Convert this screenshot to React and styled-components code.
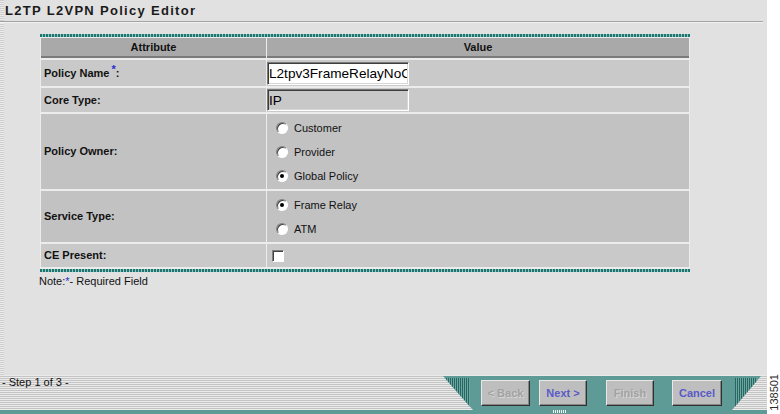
import React from 'react';
import styled, { createGlobalStyle } from 'styled-components';

const GlobalStyle = createGlobalStyle`
  html, body {
    margin: 0;
    padding: 0;
  }
  body {
    font-family: "Liberation Sans", Arial, sans-serif;
    background: #fff;
  }
`;

const TEAL = '#5e9b96';

const Page = styled.div`
  display: flex;
  width: 780px;
  height: 414px;
  overflow: hidden;
`;

const Main = styled.div`
  flex: 1;
  display: flex;
  flex-direction: column;
  background:
    repeating-linear-gradient(180deg, #cdcdcd 0 1px, #ececec 1px 2px) left top / 4px 100% no-repeat,
    #e1e1e1;
`;

const TitleBar = styled.div`
  height: 21px;
  margin-right: 4px;
  padding-left: 5px;
  display: flex;
  align-items: center;
  border-bottom: 1px solid #a3a3a3;
  box-shadow: 0 1px 0 #f2f2f2;
  font-size: 13px;
  font-weight: 700;
  letter-spacing: 1.3px;
  color: #1a1a1a;
`;

const Body = styled.div`
  padding: 12px 0 0 40px;
`;

const Table = styled.div`
  width: 650px;
  box-sizing: border-box;
  display: grid;
  grid-template-columns: 225px 1fr;
  column-gap: 1px;
  row-gap: 2px;
  padding: 0 1px;
  background: #ececec;

  &::before,
  &::after {
    content: '';
    grid-column: 1 / -1;
    height: 3px;
    margin: 0 -1px;
    background: repeating-linear-gradient(90deg, #1d766f 0 2px, #8fc3bd 2px 3px);
  }
  &::before {
    margin-bottom: -1px;
  }
`;

const HeadCell = styled.div`
  height: 18px;
  display: flex;
  align-items: center;
  justify-content: center;
  background: #a9a9a9;
  border-bottom: 2px solid #7b7b7b;
  font-size: 11px;
  font-weight: 700;
  color: #111;
`;

const Label = styled.div`
  min-height: ${(p) => p.$h}px;
  display: flex;
  align-items: center;
  padding: 0 0 1px 3px;
  box-sizing: border-box;
  background: ${(p) => (p.$light ? '#c9c9c9' : '#c2c2c2')};
  font-size: 11px;
  font-weight: 700;
  color: #111;
`;

const Value = styled.div`
  display: flex;
  flex-direction: column;
  justify-content: center;
  padding-left: ${(p) => p.$pad || 0}px;
  background: ${(p) => (p.$light ? '#c9c9c9' : '#c2c2c2')};
`;

const Star = styled.span`
  position: relative;
  top: -4px;
  color: #2b2bd0;
  font-size: 11px;
  margin-left: 2px;
`;

const TextField = styled.input`
  width: 142px;
  height: ${(p) => p.$h}px;
  box-sizing: border-box;
  margin: 0;
  padding: 0 1px;
  border: 1px solid;
  border-color: #7a7a7a #fff #fff #7a7a7a;
  box-shadow: inset 1px 1px 0 #3c3c3c, inset -1px -1px 0 #d6d6d6;
  background: ${(p) => (p.disabled ? '#c8c8c8' : '#fff')};
  color: #000;
  font-family: "Liberation Sans", Arial, sans-serif;
  font-size: 13.6px;
  outline: none;
`;

const RadioRow = styled.div`
  height: 24px;
  display: flex;
  align-items: center;
  gap: 6px;
  font-size: 11px;
  color: #111;
`;

const RadioDot = styled.span`
  position: relative;
  width: 12px;
  height: 12px;
  box-sizing: border-box;
  border-radius: 50%;
  border: 1px solid;
  border-color: #808080 #fff #fff #808080;
  box-shadow: inset 1px 1px 0 #404040;
  background: #fff;

  &::after {
    content: '';
    display: ${(p) => (p.$on ? 'block' : 'none')};
    position: absolute;
    left: 3px;
    top: 3px;
    width: 4px;
    height: 4px;
    border-radius: 50%;
    background: #000;
  }
`;

const CheckBox = styled.span`
  width: 12px;
  height: 12px;
  box-sizing: border-box;
  border: 1px solid;
  border-color: #808080 #fff #fff #808080;
  box-shadow: inset 1px 1px 0 #404040;
  background: #fff;
`;

const Note = styled.div`
  margin: 3px 0 0 -1px;
  font-size: 11px;
  color: #111;
`;

const NoteStar = styled.span`
  color: #2b2bd0;
`;

const Footer = styled.div`
  margin-top: auto;
  height: 39px;
  display: flex;
  flex-direction: column;
`;

const FooterMain = styled.div`
  flex: 1;
  display: flex;
  background: repeating-linear-gradient(180deg, #ebebeb 0 1px, #c4c4c4 1px 2px);
`;

const StepText = styled.div`
  flex: 1;
  padding: 1px 0 0 2px;
  font-size: 11px;
  line-height: 13px;
  color: #111;
`;

const Panel = styled.div`
  width: 318px;
  margin: 1px 6px 0 0;
  display: flex;
  align-items: flex-start;
  padding-top: 4px;
  box-sizing: border-box;
  background: ${TEAL};
  clip-path: polygon(0 0, 100% 0, calc(100% - 29px) 100%, 30px 100%);
`;

const Stripes = styled.div`
  width: ${(p) => p.$w}px;
  height: 30px;
  margin-top: -2px;
  margin-left: ${(p) => p.$ml}px;
  background: repeating-linear-gradient(90deg, #2a6661 0 1px, #6aa7a1 1px 2px);
`;

const NavButton = styled.div`
  width: ${(p) => p.$w}px;
  height: 26px;
  margin-left: ${(p) => p.$ml}px;
  box-sizing: border-box;
  display: flex;
  align-items: center;
  justify-content: center;
  background: #bebebe;
  border: 1px solid;
  border-color: #e8e8e8 #303030 #303030 #e8e8e8;
  box-shadow: inset -1px -1px 0 #858585;
  font-size: 11px;
  font-weight: 700;
  color: ${(p) => (p.$off ? '#a2a2a2' : '#5a5ac6')};
  text-shadow: ${(p) => (p.$off ? '1px 1px 0 #d6d6d6' : 'none')};
`;

const Band = styled.div`
  height: 4px;
  display: flex;
  background: ${TEAL};
`;

const Grip = styled.div`
  width: 14px;
  height: 3px;
  margin-left: 553px;
  background: repeating-linear-gradient(90deg, #f4f4f4 0 1px, transparent 1px 2px);
`;

const SideStrip = styled.div`
  width: 13px;
  background: #fff;
  display: flex;
  flex-direction: column;
  justify-content: flex-end;
  align-items: center;
`;

const SideCode = styled.div`
  writing-mode: vertical-rl;
  transform: rotate(180deg);
  font-size: 11px;
  color: #2a2a2a;
  margin-bottom: 3px;
`;

function Radio({ label, on }) {
  return (
    <RadioRow>
      <RadioDot $on={on} />
      {label}
    </RadioRow>
  );
}

export default function App() {
  return (
    <Page>
      <GlobalStyle />
      <Main>
        <TitleBar>L2TP L2VPN Policy Editor</TitleBar>
        <Body>
          <Table>
            <HeadCell>Attribute</HeadCell>
            <HeadCell>Value</HeadCell>

            <Label $h={26} $light>
              Policy Name<Star>*</Star>:
            </Label>
            <Value $light>
              <TextField $h={23} defaultValue="L2tpv3FrameRelayNoCE" readOnly />
            </Value>

            <Label $h={24} $light>Core Type:</Label>
            <Value $light>
              <TextField $h={22} defaultValue="IP" disabled />
            </Value>

            <Label $h={75}>Policy Owner:</Label>
            <Value $pad={9}>
              <Radio label="Customer" />
              <Radio label="Provider" />
              <Radio label="Global Policy" on />
            </Value>

            <Label $h={51}>Service Type:</Label>
            <Value $pad={9}>
              <Radio label="Frame Relay" on />
              <Radio label="ATM" />
            </Value>

            <Label $h={23} $light>CE Present:</Label>
            <Value $pad={5} $light>
              <CheckBox />
            </Value>
          </Table>
          <Note>
            Note:<NoteStar>*</NoteStar>- Required Field
          </Note>
        </Body>
        <Footer>
          <FooterMain>
            <StepText>- Step 1 of 3 -</StepText>
            <Panel>
              <Stripes $w={24} $ml={3} />
              <NavButton $w={49} $ml={11} $off>&lt; Back</NavButton>
              <NavButton $w={48} $ml={9}>Next &gt;</NavButton>
              <NavButton $w={48} $ml={19} $off>Finish</NavButton>
              <NavButton $w={50} $ml={18}>Cancel</NavButton>
              <Stripes $w={22} $ml={13} />
            </Panel>
          </FooterMain>
          <Band>
            <Grip />
          </Band>
        </Footer>
      </Main>
      <SideStrip>
        <SideCode>138501</SideCode>
      </SideStrip>
    </Page>
  );
}
